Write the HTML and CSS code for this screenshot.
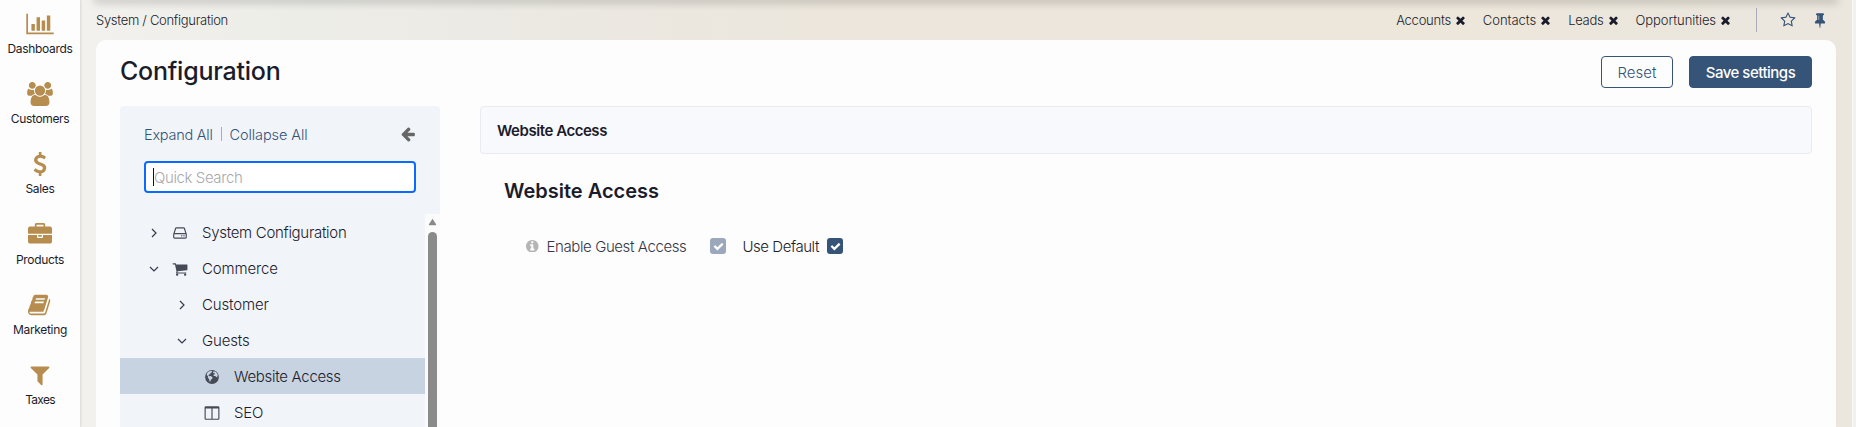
FILE: index.html
```html
<!DOCTYPE html>
<html lang="en">
<head>
<meta charset="utf-8">
<title>Configuration</title>
<link rel="stylesheet" href="styles.css">
</head>
<body>
<svg class="defs" aria-hidden="true">
  <symbol id="times" viewBox="302 302 1188 1252"><path d="M1490 1322q0 40-28 68l-136 136q-28 28-68 28t-68-28l-294-294-294 294q-28 28-68 28t-68-28l-136-136q-28-28-28-68t28-68l294-294-294-294q-28-28-28-68t28-68l136-136q28-28 68-28t68 28l294 294 294-294q28-28 68-28t68 28l136 136q28 28 28 68t-28 68l-294 294 294 294q28 28 28 68z"/></symbol>
  <symbol id="check" viewBox="0 0 1792 1792"><path d="M1671 566q0 40-28 68l-724 724-136 136q-28 28-68 28t-68-28l-136-136-362-362q-28-28-28-68t28-68l136-136q28-28 68-28t68 28l294 295 656-657q28-28 68-28t68 28l136 136q28 28 28 68z"/></symbol>
  <symbol id="right" viewBox="0 0 10 10"><path d="M3 1l4 4-4 4" fill="none" stroke="currentColor" stroke-width="1.2"/></symbol>
  <symbol id="down" viewBox="0 0 10 10"><path d="M1 3l4 4 4-4" fill="none" stroke="currentColor" stroke-width="1.2"/></symbol>
</svg>
<div class="app">
  <nav class="sidebar">
    <a class="nav"><svg class="nav-icon" viewBox="0 0 2048 1792"><path d="M640 896v512h-256v-512h256zm384-512v1024h-256v-1024h256zm1024 1152v128h-2048v-1536h128v1408h1920zm-640-896v768h-256v-768h256zm384-384v1152h-256v-1152h256z"/></svg><span>Dashboards</span></a>
    <a class="nav"><svg class="nav-icon" viewBox="0 0 1920 1792"><path d="M593 896q-162 5-265 128h-134q-82 0-138-40.500t-56-118.500q0-353 124-353 6 0 43.500 21t97.500 42.500 119 21.500q67 0 133-23-5 37-5 66 0 139 81 256zm1071 637q0 120-73 189.500t-194 69.500h-874q-121 0-194-69.500t-73-189.500q0-53 3.500-103.500t14-109 26.500-108.500 43-97.500 62-81 85.500-53.500 111.500-20q10 0 43 21.500t73 48 107 48 135 21.500 135-21.500 107-48 73-48 43-21.500q61 0 111.500 20t85.500 53.500 62 81 43 97.500 26.500 108.500 14 109 3.500 103.500zm-1024-1277q0 106-75 181t-181 75-181-75-75-181 75-181 181-75 181 75 75 181zm704 384q0 159-112.500 271.500t-271.500 112.500-271.500-112.500-112.500-271.500 112.500-271.500 271.500-112.500 271.500 112.500 112.500 271.500zm576 225q0 78-56 118.500t-138 40.500h-134q-103-123-265-128 81-117 81-256 0-29-5-66 66 23 133 23 59 0 119-21.500t97.500-42.500 43.500-21q124 0 124 353zm-128-609q0 106-75 181t-181 75-181-75-75-181 75-181 181-75 181 75 75 181z"/></svg><span>Customers</span></a>
    <a class="nav"><svg class="nav-icon" viewBox="0 0 1792 1792"><path d="M1362 1185q0 153-99.500 263.500t-258.500 136.500v175q0 14-9 23t-23 9h-135q-13 0-22.500-9.500t-9.500-22.500v-175q-66-9-127.500-31t-101.500-44.500-74-48-46.500-37.500-17.500-18q-17-21-2-41l103-135q7-10 23-12 15-2 24 9l2 2q113 99 243 125 37 8 74 8 81 0 142.500-43t61.500-122q0-28-15-53t-33.500-42-58.500-37.500-66-32-80-32.500q-39-16-61.500-25t-61.500-26.500-62.500-31-56.500-35.500-53.500-42.500-43.500-49-35.500-58-21-66.500-8.500-78q0-138 98-242t255-134v-180q0-13 9.500-22.500t22.500-9.500h135q14 0 23 9t9 23v176q57 6 110.500 23t87 33.500 63.500 37.500 39 29 15 14q17 18 5 38l-81 146q-8 15-23 16-14 3-27-7-3-3-14.500-12t-39-26.500-58.500-32-74.500-26-85.500-11.500q-95 0-155 43t-60 111q0 26 8.500 48t29.500 41.500 39.500 33 56 31 60.500 27 70 27.500q53 20 81 31.500t76 35 75.500 42.500 62 50 53 63.500 31.500 76.500 13 94z"/></svg><span>Sales</span></a>
    <a class="nav"><svg class="nav-icon" viewBox="0 0 1792 1792"><path d="M640 256h512v-128h-512v128zm1152 640v480q0 66-47 113t-113 47h-1472q-66 0-113-47t-47-113v-480h672v160q0 26 19 45t45 19h320q26 0 45-19t19-45v-160h672zm-768 0v128h-256v-128h256zm768-480v384h-1792v-384q0-66 47-113t113-47h352v-160q0-40 28-68t68-28h576q40 0 68 28t28 68v160h352q66 0 113 47t47 113z"/></svg><span>Products</span></a>
    <a class="nav"><svg class="nav-icon" viewBox="0 0 1792 1792"><path d="M1639 478q40 57 18 129l-275 906q-19 64-76.500 107.500t-122.500 43.500h-923q-77 0-148.500-53.500t-99.500-131.500q-24-67-2-127 0-4 3-27t4-37q1-8-3-21.500t-3-19.500q2-11 8-21t16.500-23.500 16.500-23.500q23-38 45-91.500t30-91.500q3-10 .5-30t-.5-28q3-11 17-28t17-23q21-36 42-92t25-90q1-9-2.500-32t.5-28q4-13 22-30.500t22-22.500q19-26 42.500-84.500t27.500-96.500q1-8-3-25.500t-2-26.500q2-8 9-18t18-23 17-21q8-12 16.500-30.500t15-35 16-36 19.500-32 26.500-23.500 36-11.500 47.500 5.500l-1 3q38-9 51-9h761q74 0 114 56t18 130l-274 906q-36 119-71.500 153.500t-128.500 34.500h-869q-27 0-38 15-11 16-1 43 24 70 144 70h923q29 0 56-15.500t35-41.500l300-987q7-22 5-57 38 15 59 43zm-1064 2q-4 13 2 22.500t20 9.500h608q13 0 25.500-9.500t16.500-22.500l21-64q4-13-2-22.500t-20-9.500h-608q-13 0-25.500 9.500t-16.500 22.500zm-83 256q-4 13 2 22.500t20 9.500h608q13 0 25.500-9.500t16.500-22.500l21-64q4-13-2-22.500t-20-9.500h-608q-13 0-25.500 9.500t-16.500 22.500z"/></svg><span>Marketing</span></a>
    <a class="nav"><svg class="nav-icon" viewBox="0 0 1792 1792"><path d="M1595 295q17 41-14 70l-493 493v742q0 42-39 59-13 5-25 5-27 0-45-19l-256-256q-19-19-19-45v-486l-493-493q-31-29-14-70 17-39 59-39h1280q42 0 59 39z"/></svg><span class="t-tax">Taxes</span></a>
  </nav>
  <main class="main">
    <div class="topshade"></div>
    <div class="topbar">
      <span class="crumb">System / Configuration</span>
      <div class="pins">
        <span class="pin"><span>Accounts</span><svg class="x"><use href="#times"/></svg></span>
        <span class="pin"><span class="t-con">Contacts</span><svg class="x"><use href="#times"/></svg></span>
        <span class="pin"><span>Leads</span><svg class="x"><use href="#times"/></svg></span>
        <span class="pin"><span class="t-opp">Opportunities</span><svg class="x"><use href="#times"/></svg></span>
      </div>
      <div class="tools">
        <svg class="i16" viewBox="0 0 1792 1792"><path d="M1201 1004l306-297-422-62-189-382-189 382-422 62 306 297-73 421 378-199 377 199zm527-357q0 22-26 48l-363 354 86 500q1 7 1 20 0 50-41 50-19 0-40-12l-449-236-449 236q-22 12-40 12-21 0-31.500-14.500t-10.500-35.500q0-6 2-20l86-500-364-354q-25-27-25-48 0-37 56-46l502-73 225-455q19-41 49-41t49 41l225 455 502 73q56 9 56 46z"/></svg>
        <svg class="i16" viewBox="0 0 1792 1792"><path d="M800 864v-448q0-14-9-23t-23-9-23 9-9 23v448q0 14 9 23t23 9 23-9 9-23zm672 352q0 26-19 45t-45 19h-429l-51 483q-2 12-10.500 20.500t-20.500 8.500h-1q-27 0-32-27l-76-485h-404q-26 0-45-19t-19-45q0-123 78.500-221.500t177.500-98.500v-512q-52 0-90-38t-38-90 38-90 90-38h640q52 0 90 38t38 90-38 90-90 38v512q99 0 177.500 98.500t78.500 221.500z"/></svg>
      </div>
    </div>
    <section class="page">
      <header class="head">
        <h1 class="title">Configuration</h1>
        <div class="actions"><button class="btn reset">Reset</button><button class="btn save">Save settings</button></div>
      </header>
      <div class="cols">
        <aside class="panel">
          <div class="links">
            <span class="l-exp">Expand All</span><i class="bar"></i><span class="l-col">Collapse All</span>
            <svg class="back" viewBox="128 128 1664 1664"><path d="M1664 896v128q0 53-32.500 90.500t-84.500 37.500h-704l293 294q38 36 38 90t-38 90l-75 76q-37 37-90 37-52 0-91-37l-651-652q-37-37-37-90 0-52 37-91l651-650q38-38 91-38 52 0 90 38l75 74q38 38 38 91t-38 91l-293 293h704q52 0 84.500 37.500t32.500 90.500z"/></svg>
          </div>
          <div class="search"><i class="caret"></i><span>Quick Search</span></div>
          <div class="scroll">
            <div class="tree">
              <div class="row"><svg class="chev"><use href="#right"/></svg><svg class="i16 ic" viewBox="0 0 1792 1792"><path d="M1168 1216q0 33-23.500 56.500t-56.500 23.500-56.500-23.500-23.500-56.500 23.500-56.500 56.500-23.500 56.500 23.500 23.500 56.500zm256 0q0 33-23.500 56.500t-56.500 23.500-56.500-23.500-23.500-56.500 23.500-56.500 56.500-23.500 56.500 23.500 23.500 56.500zm112 160v-320q0-13-9.500-22.500t-22.500-9.500h-1216q-13 0-22.500 9.500t-9.500 22.500v320q0 13 9.500 22.500t22.500 9.500h1216q13 0 22.500-9.500t9.500-22.500zm-1230-480h1180l-157-482q-4-13-16-21.500t-26-8.500h-782q-14 0-26 8.500t-16 21.500zm1358 160v320q0 66-47 113t-113 47h-1216q-66 0-113-47t-47-113v-320q0-25 16-75l197-606q17-53 63-86t101-33h782q55 0 101 33t63 86l197 606q16 50 16 75z"/></svg><span class="r-long">System Configuration</span></div>
              <div class="row"><svg class="chev"><use href="#down"/></svg><svg class="i16 ic" viewBox="0 0 1792 1792"><path d="M704 1536q0 52-38 90t-90 38-90-38-38-90 38-90 90-38 90 38 38 90zm896 0q0 52-38 90t-90 38-90-38-38-90 38-90 90-38 90 38 38 90zm128-1088v512q0 24-16.500 42.500t-40.500 21.500l-1044 122q13 60 13 70 0 16-24 64h920q26 0 45 19t19 45-19 45-45 19h-1024q-26 0-45-19t-19-45q0-11 8-31.500t16-36 21.500-40 15.500-29.500l-177-823h-204q-26 0-45-19t-19-45 19-45 45-19h256q16 0 28.500 6.500t19.500 15.500 13 24.500 8 26 5.500 29.500 4.500 26h1201q26 0 45 19t19 45z"/></svg><span>Commerce</span></div>
              <div class="row sub"><svg class="chev"><use href="#right"/></svg><span>Customer</span></div>
              <div class="row sub"><svg class="chev"><use href="#down"/></svg><span>Guests</span></div>
              <div class="row leaf on"><svg class="i16 ic" viewBox="0 0 16 16"><circle cx="8" cy="8" r="6.900"/><path class="land" d="M4.300 2.800l2.600-1 1.300.5-.6 1.200-1.300.6.200 1-1.500.3-.6 1.200 1 .6 1.500-.1 1.700 1.400-.4 1.300-1.400.9-.5 2-.9-.5-.3-2.300-1.300-1.200.2-1.500-1.300-1.300.4-1.800zM9.400 2.600l2-.2 1.700 1.800.9 2-.9.900.6 1-1 .2-1.500-1.200-1.700-.2.300-1.300 1.200-.7-.8-.9-1.100.3z"/></svg><span class="r-long">Website Access</span></div>
              <div class="row leaf"><svg class="i16 ic" viewBox="0 0 1792 1792"><path d="M224 1536h608v-1152h-640v1120q0 13 9.500 22.500t22.500 9.500zm1376-32v-1120h-640v1152h608q13 0 22.500-9.500t9.500-22.500zm128-1216v1216q0 66-47 113t-113 47h-1344q-66 0-113-47t-47-113v-1216q0-66 47-113t113-47h1344q66 0 113 47t47 113z"/></svg><span>SEO</span></div>
            </div>
            <div class="track"><svg class="up" viewBox="0 0 10 8"><path d="M5 .5L9 6.500Q9.300 7.500 8.300 7.500H1.700Q.7 7.500 1 6.500z"/></svg><i class="thumb"></i></div>
          </div>
        </aside>
        <section class="content">
          <div class="strip"><span>Website Access</span></div>
          <h2 class="sub-title">Website Access</h2>
          <div class="field">
            <svg class="info" viewBox="128 128 1536 1536"><path d="M1152 1376v-160q0-14-9-23t-23-9h-96v-512q0-14-9-23t-23-9h-320q-14 0-23 9t-9 23v160q0 14 9 23t23 9h96v320h-96q-14 0-23 9t-9 23v160q0 14 9 23t23 9h448q14 0 23-9t9-23zm-128-896v-160q0-14-9-23t-23-9h-192q-14 0-23 9t-9 23v160q0 14 9 23t23 9h192q14 0 23-9t9-23zm640 416q0 209-103 385.500t-279.500 279.500-385.500 103-385.500-103-279.500-279.500-103-385.500 103-385.500 279.500-279.500 385.500-103 385.500 103 279.500 279.500 103 385.500z"/></svg>
            <span class="label">Enable Guest Access</span>
            <span class="box off"><svg><use href="#check"/></svg></span>
            <span class="use">Use Default</span>
            <span class="box"><svg><use href="#check"/></svg></span>
          </div>
        </section>
      </div>
    </section>
  </main>
  <div class="edge"></div>
</div>
</body>
</html>
```
FILE: styles.css
```css
* { box-sizing: border-box; }
body { margin: 0; overflow: hidden; font-family: Inter, "Open Sans", sans-serif; font-size: 15px; font-weight: 300; color: #1b1c2b; }
h1, h2 { margin: 0; }
svg { fill: currentColor; flex: none; display: block; }
.defs { position: absolute; width: 0; height: 0; }
.app { display: flex; height: 427px; background: linear-gradient(90deg, #f2f1ed 80px, #edede8 300px, #ebe8e1 600px, #ece6dc 850px, #ece6db 1500px, #ebe7df 1856px); }
.sidebar { width: 80px; flex: none; background: #fdfdfd; box-shadow: 0 0 3px rgba(0,0,0,.2); padding-top: 12px; }
.nav { display: flex; flex-direction: column; align-items: center; height: 70.2px; font-size: 12px; font-weight: 400; line-height: 17px; gap: 4px; letter-spacing: -.33px; }
.t-tax { letter-spacing: -.7px; }
.nav-icon { height: 24px; width: 28px; color: #b68d4e; }
.main { flex: 1; display: flex; flex-direction: column; padding: 0 16px; }
.topshade { height: 0; box-shadow: 0 0 8px 2px rgba(0,0,0,.3); border-radius: 8px; }
.topbar { display: flex; align-items: center; height: 40px; font-size: 13px; flex: none; letter-spacing: -.25px; }
.crumb { letter-spacing: -.3px; }
.pins { margin-left: auto; display: flex; gap: 18px; }
.pin { display: flex; align-items: center; gap: 5px; }
.t-con { letter-spacing: -.05px; }
.t-opp { letter-spacing: -.08px; }
.x { width: 9px; height: 9px; }
.tools { margin-left: 26px; border-left: 1px solid #a9acb8; height: 24px; display: flex; align-items: center; gap: 16px; padding: 0 8px 0 23px; color: #355478; }
.i16 { width: 16px; height: 16px; }
.page { flex: 1; background: #fdfdfd; border-radius: 10px 10px 0 0; padding: 0 24px; }
.head { display: flex; justify-content: space-between; height: 66px; padding-top: 16px; }
.title { font-size: 25px; font-weight: 500; line-height: 30px; letter-spacing: -.24px; }
.actions { display: flex; gap: 16px; }
.btn { height: 32px; border: 1px solid #355478; border-radius: 4px; background: #fdfdfd; color: #355478; font: 300 15px Inter, sans-serif; padding: 0; }
.reset { width: 72px; }
.save { width: 123px; background: #355478; color: #fff; font-weight: 500; letter-spacing: -.5px; }
.cols { display: flex; gap: 40px; }
.panel { width: 320px; height: 321px; background: #f1f4f9; border-radius: 4px 4px 0 0; overflow: hidden; flex: none; }
.links { display: flex; align-items: center; padding: 18px 24px 0; height: 38px; color: #355478; font-size: 14.5px; }
.l-exp { letter-spacing: -.25px; }
.l-col { letter-spacing: -.1px; }
.bar { width: 1px; height: 14px; background: #a4adbf; margin: 0 8px; }
.back { width: 15px; height: 15px; color: #666; margin-left: auto; }
.search { margin: 17px 24px 0; height: 32px; border: 2px solid #0a6cff; border-radius: 4px; background: #fff; display: flex; align-items: center; padding-left: 7px; color: #a8a8aa; letter-spacing: -.4px; }
.caret { width: 1px; height: 18px; background: #111; }
.scroll { display: flex; margin-top: 21px; }
.tree { width: 305px; }
.row { display: flex; align-items: center; height: 36px; padding: 1px 0 0 29px; letter-spacing: -.15px; }
.r-long { letter-spacing: -.3px; }
.chev { width: 10px; height: 10px; margin-right: 13px; color: #343b4c; }
.ic { margin-right: 14px; color: #454a56; }
.sub { padding-left: 57px; }
.sub .chev { margin-right: 15px; }
.leaf { padding-left: 84px; }
.on { background: #c8d3e1; }
.land { fill: #c8d3e1; }
.track { width: 15px; height: 213px; background: #fbfbfb; padding: 4px 3px 0; color: #8a8a8a; }
.up { width: 9px; height: 8px; }
.thumb { display: block; margin-top: 6px; height: 210px; background: #8a8a8a; border-radius: 5px; }
.content { flex: 1; }
.strip { height: 48px; border: 1px solid #eaebef; border-radius: 4px; background: #f8f9fc; display: flex; align-items: center; padding-left: 16px; font-weight: 600; letter-spacing: -.45px; }
.sub-title { margin: 24px 0 0 24px; font-size: 20px; line-height: 26px; font-weight: 600; }
.field { display: flex; align-items: center; margin: 34px 0 0 46px; height: 16px; }
.info { width: 12.5px; height: 12.5px; color: #b5b5b5; margin-right: 8px; }
.label { color: #353645; letter-spacing: -.4px; }
.box { width: 16px; height: 16px; border-radius: 3px; background: #355478; color: #fff; display: flex; align-items: center; justify-content: center; }
.box svg { width: 11px; height: 11px; }
.off { background: #9ba8bb; margin: 0 16px 0 24px; }
.use { margin-right: 8.500px; letter-spacing: -.45px; }
.edge { width: 4px; background: #f1f0ec; border-left: 1px solid #fbfaf9; }
```
